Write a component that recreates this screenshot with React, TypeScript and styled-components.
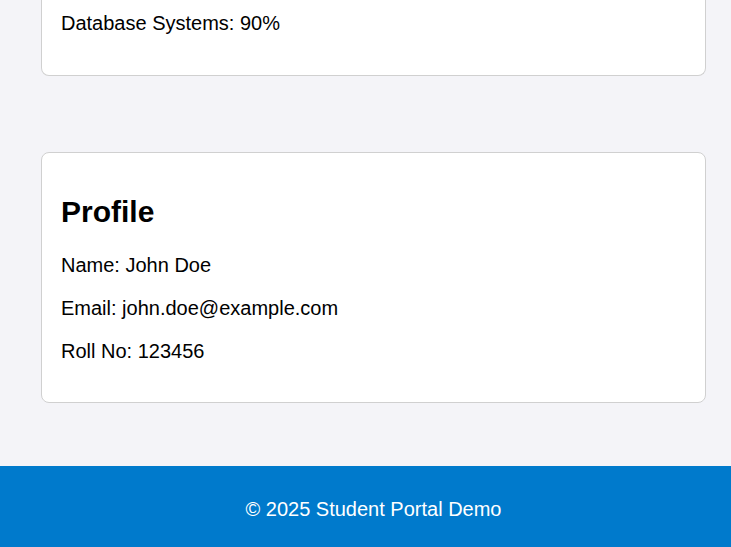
import React from "react";
import styled, { createGlobalStyle } from "styled-components";

const Global = createGlobalStyle`
  html, body { margin: 0; padding: 0; }
  body {
    background: #f4f4f8;
    font-family: "Liberation Sans", Arial, sans-serif;
    color: #000;
    overflow: hidden;
  }
`;

const Page = styled.div`
  display: flex;
  flex-direction: column;
  width: 747px;
  min-height: 547px;
`;

const Main = styled.main`
  display: flex;
  flex-direction: column;
  gap: 76px;
  padding: 0 41px 63px;
`;

const Card = styled.section<{ $cut?: boolean }>`
  background: #fff;
  border: 1px solid #d0d0d0;
  border-radius: 8px;
  padding: 20px 19px 19px;
  ${(p) =>
    p.$cut &&
    `
    border-top: none;
    border-top-left-radius: 0;
    border-top-right-radius: 0;
    padding-top: 0;
    padding-bottom: 20px;
  `}
`;

const Title = styled.h2`
  font-size: 30px;
  font-weight: bold;
  margin: 22px 0 25px;
`;

const Line = styled.p<{ $first?: boolean }>`
  font-size: 20px;
  margin: 0 0 20px;
  ${(p) => p.$first && `margin-top: 12px;`}
`;

const Footer = styled.footer`
  margin-top: auto;
  background: #007acc;
  color: #fff;
  text-align: center;
  font-size: 20px;
  padding: 32px 0 26px;
`;

export default function App() {
  return (
    <Page>
      <Global />
      <Main>
        <Card $cut>
          <Line $first>Database Systems: 90%</Line>
        </Card>
        <Card>
          <Title>Profile</Title>
          <Line>Name: John Doe</Line>
          <Line>Email: john.doe@example.com</Line>
          <Line>Roll No: 123456</Line>
        </Card>
      </Main>
      <Footer>© 2025 Student Portal Demo</Footer>
    </Page>
  );
}
